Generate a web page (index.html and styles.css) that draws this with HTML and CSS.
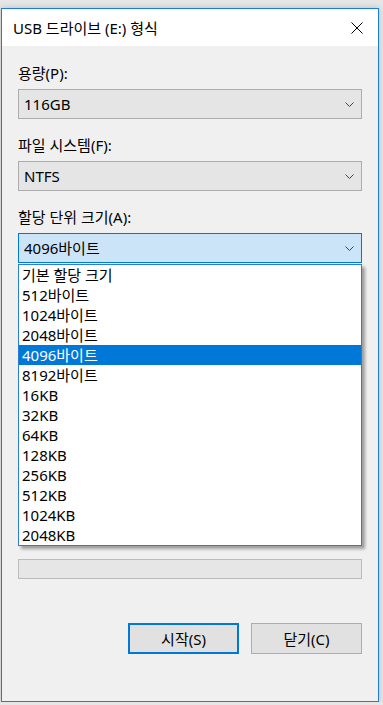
FILE: index.html
```html
<!DOCTYPE html>
<html lang="ko">
<head>
    <meta charset="UTF-8">
    <meta name="viewport" content="width=device-width, initial-scale=1.0">
    <title>USB 드라이브 (E:) 형식</title>
    <link rel="stylesheet" href="styles.css">
</head>
<body>
    <div class="window">
        <div class="titlebar">
            <span class="title">USB 드라이브 (E:) 형식</span>
            <button class="close" aria-label="닫기">
                <svg width="12" height="12" viewBox="0 0 12 12">
                    <path d="M0.5 0.5 L11.5 11.5 M11.5 0.5 L0.5 11.5" stroke="#000" stroke-width="1" fill="none"/>
                </svg>
            </button>
        </div>

        <div class="content">
            <div class="field">
                <label class="label">용량(P):</label>
                <div class="combo">
                    <span>116GB</span>
                    <svg class="arrow" width="9" height="5" viewBox="0 0 9 5"><path d="M0.5 0.5 L4.5 4.5 L8.5 0.5" stroke="#444" fill="none"/></svg>
                </div>
            </div>

            <div class="field">
                <label class="label">파일 시스템(F):</label>
                <div class="combo">
                    <span>NTFS</span>
                    <svg class="arrow" width="9" height="5" viewBox="0 0 9 5"><path d="M0.5 0.5 L4.5 4.5 L8.5 0.5" stroke="#444" fill="none"/></svg>
                </div>
            </div>

            <div class="field">
                <label class="label">할당 단위 크기(A):</label>
                <div class="combo-wrap">
                    <div class="combo open">
                        <span>4096바이트</span>
                        <svg class="arrow" width="9" height="5" viewBox="0 0 9 5"><path d="M0.5 0.5 L4.5 4.5 L8.5 0.5" stroke="#444" fill="none"/></svg>
                    </div>
                    <ul class="dropdown">
                        <li>기본 할당 크기</li>
                        <li>512바이트</li>
                        <li>1024바이트</li>
                        <li>2048바이트</li>
                        <li class="active">4096바이트</li>
                        <li>8192바이트</li>
                        <li>16KB</li>
                        <li>32KB</li>
                        <li>64KB</li>
                        <li>128KB</li>
                        <li>256KB</li>
                        <li>512KB</li>
                        <li>1024KB</li>
                        <li>2048KB</li>
                    </ul>
                </div>
            </div>

            <div class="progress"></div>

            <div class="buttons">
                <button class="btn default">시작(S)</button>
                <button class="btn">닫기(C)</button>
            </div>
        </div>
    </div>
</body>
</html>
```

FILE: styles.css
```css
body {
    margin: 0;
    background-color: #e6e6e6;
    font-family: "Noto Sans", "Noto Sans CJK KR", sans-serif;
    font-size: 15px;
    color: #000;
}
.window {
    box-sizing: border-box;
    width: 378px;
    height: 694px;
    margin: 8px 0 0 1px;
    border: 1px solid #1c7fd6;
    background-color: #f0f0f0;
    box-shadow: 0 0 6px rgba(0,0,0,0.18);
    display: flex;
    flex-direction: column;
}
.titlebar {
    height: 37px;
    background-color: #fff;
    display: flex;
    align-items: center;
    justify-content: space-between;
}
.title {
    padding-left: 11px;
    line-height: 20px;
}
.close {
    width: 42px;
    height: 37px;
    border: none;
    background: none;
    padding: 0;
    display: flex;
    align-items: center;
    justify-content: center;
}
.content {
    padding: 17px 16px 0;
    display: flex;
    flex-direction: column;
}
.field {
    margin-bottom: 16px;
}
.label {
    display: block;
    line-height: 20px;
    margin-bottom: 6px;
}
.combo {
    box-sizing: border-box;
    height: 30px;
    border: 1px solid #adadad;
    background-color: #e5e5e5;
    padding: 0 6px 0 5px;
    display: flex;
    align-items: center;
    justify-content: space-between;
    line-height: 20px;
}
.combo.open {
    border-color: #0078d7;
    background-color: #cce4f7;
}
.arrow {
    margin-right: 1px;
}
.combo-wrap {
    position: relative;
}
.dropdown {
    position: absolute;
    top: 31px;
    left: 0;
    right: 0;
    margin: 0;
    padding: 0;
    list-style: none;
    background-color: #fff;
    border: 1px solid #2b7fd0;
    box-shadow: 3px 3px 3px rgba(0,0,0,0.35);
    z-index: 2;
}
.dropdown li {
    height: 20px;
    line-height: 20px;
    padding-left: 3px;
}
.dropdown li.active {
    background-color: #0078d7;
    color: #fff;
}
.progress {
    box-sizing: border-box;
    height: 20px;
    margin-top: 280px;
    border: 1px solid #bcbcbc;
    background-color: #e6e6e6;
}
.buttons {
    display: flex;
    justify-content: flex-end;
    gap: 12px;
    margin-top: 44px;
}
.btn {
    box-sizing: border-box;
    width: 111px;
    height: 31px;
    border: 1px solid #adadad;
    background-color: #e1e1e1;
    font-family: inherit;
    font-size: 15px;
    color: #000;
    padding: 0;
}
.btn.default {
    border: 2px solid #0078d7;
}
```
